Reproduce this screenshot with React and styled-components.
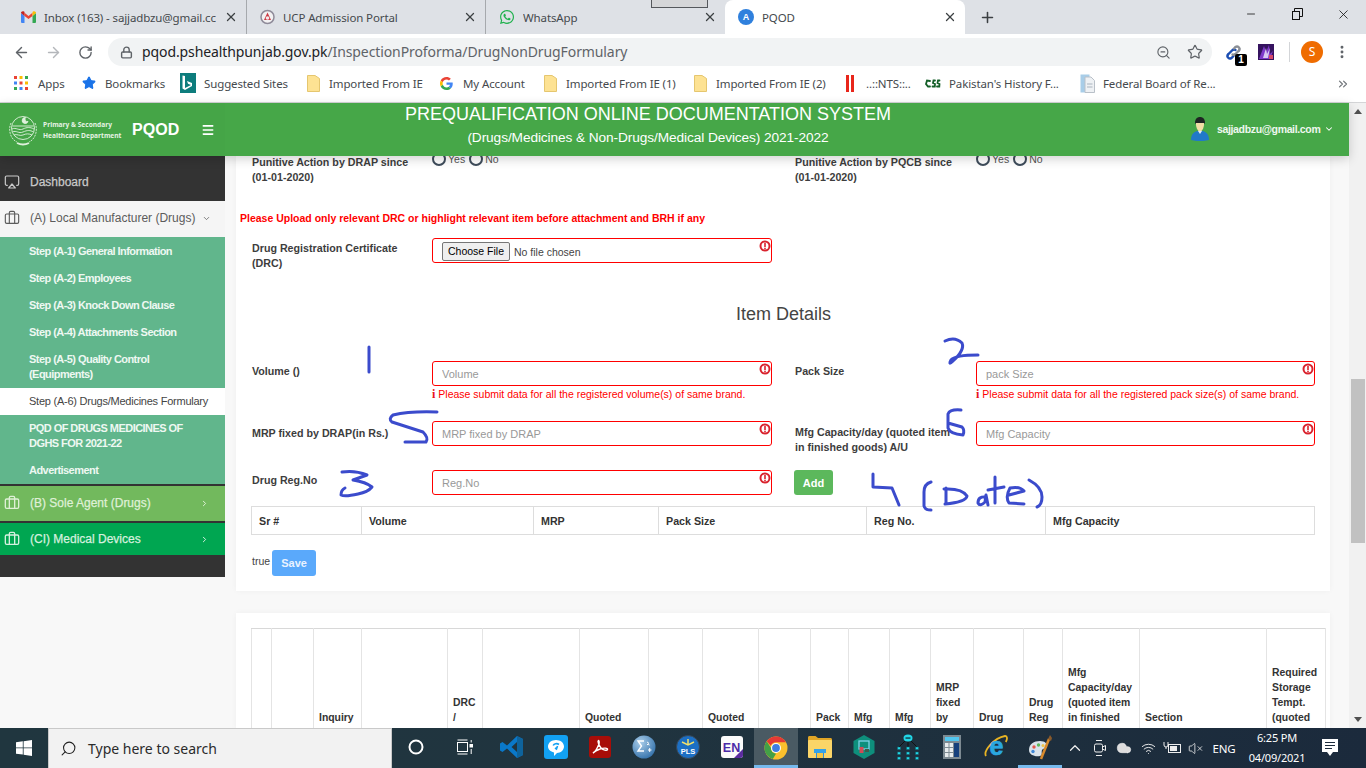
import styled, { createGlobalStyle } from "styled-components";
import {
  Airplay,
  ArrowLeft,
  ArrowRight,
  Briefcase,
  ChevronDown,
  ChevronRight,
  ChevronUp,
  ChevronsRight,
  Cloud,
  Lock,
  Menu,
  Minus,
  MoreVertical,
  Plus,
  RotateCw,
  Search,
  Star,
  VolumeX,
  Wifi,
  X,
  ZoomOut,
} from "lucide-react";
import { FaWhatsapp } from "react-icons/fa";

const UI_FONT = `"Noto Sans", "Liberation Sans", sans-serif`;

const GlobalStyle = createGlobalStyle`
  html, body {
    margin: 0;
    padding: 0;
    overflow: hidden;
  }
  * {
    box-sizing: border-box;
  }
  body {
    font-family: "Liberation Sans", Arial, sans-serif;
    font-size: 11px;
    color: #333;
  }
`;

const Screen = styled.div`
  width: 1366px;
  height: 768px;
  display: flex;
  flex-direction: column;
  overflow: hidden;
  position: relative;
  background: #fff;
`;

/* browser chrome */

const TabStrip = styled.div`
  height: 34px;
  flex: none;
  display: flex;
  align-items: stretch;
  padding-left: 8px;
  background: #dee1e6;
  font-family: ${UI_FONT};
  font-size: 11.5px;
  letter-spacing: -0.12px;
  color: #45494d;
`;

const GlitchBox = styled.div`
  position: absolute;
  left: 651px;
  top: 0;
  width: 57px;
  height: 8px;
  background: #d5d6d8;
  border: 1px solid #55585c;
  border-top: none;
`;

const Tab = styled.div`
  width: ${({ $width }) => $width || 239}px;
  flex: none;
  display: flex;
  align-items: center;
  gap: 8px;
  padding: 0 8px 0 13px;
  position: relative;
  background: ${({ $active }) => ($active ? "#fff" : "transparent")};
  border-radius: ${({ $active }) => ($active ? "8px 8px 0 0" : "0")};
  border-right: ${({ $divider }) => ($divider ? "1px solid #a6a9ad" : "none")};
  background-clip: padding-box;
`;

const TabTitle = styled.span`
  flex: 1;
  min-width: 0;
  white-space: nowrap;
  overflow: hidden;
`;

const TabClose = styled(X)`
  flex: none;
  color: #3c4043;
`;

const NewTab = styled.div`
  width: 44px;
  display: flex;
  align-items: center;
  justify-content: center;
  color: #3c4043;
`;

const WindowControls = styled.div`
  margin-left: auto;
  display: flex;
  align-items: flex-start;
  color: #111;
`;

const WindowButton = styled.div`
  width: 46px;
  height: 28px;
  display: flex;
  align-items: center;
  justify-content: center;
`;

const Toolbar = styled.div`
  height: 36px;
  flex: none;
  display: flex;
  align-items: center;
  padding-left: 5px;
  background: #fff;
  color: #5f6368;
`;

const NavButton = styled.div`
  width: 32px;
  display: flex;
  justify-content: center;
  color: ${({ $muted }) => ($muted ? "#b4b7bb" : "#5f6368")};
`;

const Omnibox = styled.div`
  width: 1104px;
  height: 28px;
  margin-left: 7px;
  display: flex;
  align-items: center;
  padding: 0 9px 0 12px;
  border-radius: 14px;
  background: #f1f3f4;
`;

const Url = styled.div`
  flex: 1;
  margin-left: 9px;
  padding-bottom: 2px;
  font-family: ${UI_FONT};
  font-size: 14px;
  letter-spacing: -0.1px;
  color: #5f6368;
  white-space: nowrap;
`;

const UrlHost = styled.span`
  color: #202124;
`;

const OmniIcons = styled.div`
  display: flex;
  align-items: center;
  gap: 16px;
`;

const ExtensionTray = styled.div`
  flex: 1;
  display: flex;
  align-items: center;
  padding-left: 13px;
`;

const ExtBadge = styled.span`
  position: absolute;
  right: -5px;
  bottom: -5px;
  width: 12px;
  height: 12px;
  border-radius: 2px;
  background: #000;
  color: #fff;
  font: bold 10px/12px "Liberation Sans", sans-serif;
  text-align: center;
`;

const ExtIcon = styled.div`
  position: relative;
  width: 17px;
  height: 17px;
  margin-right: ${({ $gap }) => $gap}px;
`;

const ToolbarDivider = styled.div`
  width: 1px;
  height: 20px;
  margin-right: 11px;
  background: #d3d5d8;
`;

const ProfileBadge = styled.div`
  width: 22px;
  height: 22px;
  border-radius: 50%;
  background: #ef6c00;
  color: #fff;
  font: 12px/22px ${UI_FONT};
  text-align: center;
  margin-right: 11px;
`;

const BookmarkBar = styled.div`
  height: 33px;
  flex: none;
  display: flex;
  align-items: center;
  padding-left: 14px;
  padding-bottom: 6px;
  background: #fff;
  border-bottom: 1px solid #d4d5d7;
  font-family: ${UI_FONT};
  font-size: 11.5px;
  letter-spacing: -0.12px;
  color: #45494d;
  position: relative;
`;

const Bookmark = styled.div`
  width: ${({ $width }) => $width}px;
  flex: none;
  display: flex;
  align-items: center;
  gap: ${({ $gap }) => $gap || 8}px;
  white-space: nowrap;
`;

const BookmarkMore = styled(ChevronsRight)`
  position: absolute;
  right: 16px;
  top: 7px;
  color: #70757a;
`;

/* site frame */

const Viewport = styled.div`
  flex: 1;
  min-height: 0;
  display: flex;
`;

const Site = styled.div`
  flex: 1;
  min-width: 0;
  display: flex;
  flex-direction: column;
  background: #f8f8f8;
`;

const Header = styled.header`
  height: 53px;
  flex: none;
  display: flex;
  align-items: stretch;
  position: relative;
  z-index: 2;
  background: #46a748;
  color: #fff;
  box-shadow: 0 3px 10px rgba(0, 0, 0, 0.18);
`;

const Brand = styled.div`
  width: 225px;
  flex: none;
  display: flex;
  align-items: center;
  padding-left: 8px;
  background: #45a547;
  position: relative;
`;

const BrandText = styled.div`
  margin-left: 5px;
  width: 89px;
  font-size: 6.6px;
  line-height: 11px;
  font-weight: bold;
  font-family: "Open Sans", sans-serif;
  color: #e6f3e4;
  white-space: nowrap;
`;

const BrandName = styled.div`
  font-size: 16px;
  font-weight: bold;
  letter-spacing: 0.1px;
`;

const HeaderMenu = styled(Menu)`
  margin-left: 21px;
`;

const TitleBlock = styled.div`
  width: 846px;
  flex: none;
  display: flex;
  flex-direction: column;
  align-items: center;
`;

const MainTitle = styled.div`
  font-size: 18px;
  line-height: 23px;
  white-space: nowrap;
`;

const SubTitle = styled.div`
  font-size: 13.7px;
  line-height: 20px;
  margin-top: 2px;
  letter-spacing: -0.1px;
  white-space: nowrap;
`;

const UserBlock = styled.div`
  flex: 1;
  display: flex;
  align-items: center;
  padding-left: 120px;
  padding-bottom: 1px;
  white-space: nowrap;
`;

const UserMail = styled.span`
  margin-left: 8px;
  margin-right: 4px;
  font-size: 10.5px;
  font-weight: bold;
  color: #eef7ee;
  letter-spacing: -0.35px;
`;

const Body = styled.div`
  flex: 1;
  min-height: 0;
  display: flex;
  overflow: hidden;
`;

/* sidebar */

const Sidebar = styled.nav`
  width: 225px;
  flex: none;
  height: 421px;
  background: #333;
`;

const NavGroup = styled.div`
  height: ${({ $height }) => $height}px;
  margin-bottom: ${({ $gap }) => $gap || 0}px;
  display: flex;
  align-items: center;
  padding: ${({ $drop }) => $drop || 0}px 0 ${({ $lift }) => $lift || 0}px 4px;
  font-size: 12px;
  background: ${({ $bg }) => $bg};
  color: ${({ $color }) => $color};

  svg {
    flex: none;
  }
`;

const NavLabel = styled.span`
  margin-left: 10px;
  flex: ${({ $fill }) => ($fill ? 1 : "none")};
  -webkit-text-stroke: ${({ $strong }) => ($strong ? "0.25px" : "0")};
  white-space: nowrap;
`;

const NavArrow = styled.span`
  display: flex;
  margin-right: 16px;
  margin-left: ${({ $inline }) => ($inline ? "7px" : "0")};
`;

const SubMenu = styled.div`
  padding-top: 1px;
  background: #61b68c;
  margin-bottom: 2px;
`;

const SubItem = styled.div`
  padding: 6px 30px 6px 29px;
  min-height: 27px;
  font-size: 11px;
  line-height: 15px;
  font-weight: ${({ $active }) => ($active ? 400 : 700)};
  letter-spacing: ${({ $active }) => ($active ? "-0.24px" : "-0.55px")};
  color: ${({ $active }) => ($active ? "#444" : "#eef8f2")};
  background: ${({ $active }) => ($active ? "#fff" : "transparent")};
  white-space: ${({ $active }) => ($active ? "nowrap" : "normal")};
`;

/* page content */

const Content = styled.main`
  flex: 1;
  min-width: 0;
  position: relative;
  overflow: hidden;
  padding: 0 19px 0 11px;
`;

const Ink = styled.svg`
  position: absolute;
  left: 0;
  top: 0;
  pointer-events: none;
  fill: none;
  stroke: #3b4bcc;
  stroke-width: 3;
  stroke-linecap: round;
  stroke-linejoin: round;
`;

const Card = styled.section`
  background: #fff;
  margin-top: ${({ $top }) => $top}px;
  padding: 0 15px 15px 16px;
  box-shadow: 0 0 6px rgba(0, 0, 0, 0.04);
`;

const FormRow = styled.div`
  display: grid;
  grid-template-columns: 180px 340px 23px 181px 339px;
  margin-top: ${({ $top }) => $top || 0}px;
  align-items: start;
`;

const Label = styled.label`
  display: block;
  grid-column: ${({ $col }) => $col};
  padding-top: ${({ $pad }) => ($pad === undefined ? 3 : $pad)}px;
  font-size: 10.7px;
  line-height: 15px;
  font-weight: bold;
  color: #3d3d3d;
`;

const RadioLine = styled.div`
  display: flex;
  align-items: center;
  gap: 2px;
  height: 10px;
  font-size: 10.5px;
  color: #555;
  margin-top: -1px;
`;

const Radio = styled.span`
  width: 14px;
  height: 14px;
  flex: none;
  border-radius: 50%;
  border: 2px solid #3f4d5c;
  background: #fff;
  margin-left: ${({ $gap }) => $gap || 0}px;
`;

const Notice = styled.p`
  margin: 26px 0 0 -12px;
  font-size: 10.5px;
  line-height: 14px;
  font-weight: bold;
  color: #f00;
`;

const FieldBox = styled.div`
  grid-column: ${({ $col }) => $col};
`;

const FieldWrap = styled.div`
  position: relative;
  height: 25px;
  display: flex;
  align-items: center;
  padding-left: 9px;
  border: 1px solid #f00;
  border-radius: 3px;
  background: #fff;
`;

const TextInput = styled.input`
  width: 100%;
  border: 0;
  padding: 0;
  outline: 0;
  background: transparent;
  font: 11px "Liberation Sans", sans-serif;
  &::placeholder {
    color: #999;
    opacity: 1;
  }
`;

const FileInput = styled.input`
  font: 10.5px "Liberation Sans", sans-serif;
  color: #444;
  margin-top: 1px;
  &::file-selector-button {
    font: 10.5px "Liberation Sans", sans-serif;
    height: 19px;
    width: 68px;
    padding: 0;
    color: #000;
    background: #efefef;
    border: 1px solid #767676;
    border-radius: 2px;
  }
`;

const ErrorBadge = styled.svg`
  position: absolute;
  right: -1px;
  top: 0;
`;

const Hint = styled.div`
  display: flex;
  align-items: center;
  gap: 3px;
  height: 14px;
  margin-top: 1px;
  font-size: 10.5px;
  color: #f00;
  white-space: nowrap;
`;

const HintMark = styled.b`
  font: bold 12px "Liberation Serif", serif;
  color: #e8111a;
`;

const SectionTitle = styled.h2`
  margin: 33px 0 0;
  font-size: 18px;
  line-height: 20px;
  font-weight: 400;
  text-align: center;
  color: #444;
`;

const AddButton = styled.button`
  grid-column: 4;
  width: 39px;
  height: 25px;
  margin-left: -1px;
  padding: 0;
  border: 0;
  border-radius: 3px;
  background: #5cb85c;
  color: #fff;
  font: bold 11px "Liberation Sans", sans-serif;
`;

const GridTable = styled.table`
  width: ${({ $width }) => $width}px;
  table-layout: fixed;
  border-collapse: collapse;
  margin: ${({ $margin }) => $margin || 0};
`;

const Column = styled.col`
  width: ${({ $width }) => $width}px;
`;

const ItemHead = styled.th`
  height: 28px;
  padding: 0 7px;
  border: 1px solid #ddd;
  text-align: left;
  font-size: 10.7px;
  font-weight: bold;
  color: #333;
`;

const ListHead = styled.th`
  height: 101px;
  padding: 0 4px 4px 5px;
  border: 1px solid #e4e4e4;
  border-top-color: #d8d8d8;
  text-align: left;
  vertical-align: bottom;
  font-size: 10.4px;
  line-height: 15px;
  font-weight: bold;
  color: #333;
  white-space: nowrap;
`;

const SaveRow = styled.div`
  display: flex;
  align-items: center;
  gap: 2px;
  margin-top: 15px;
  font-size: 10.5px;
  color: #444;
`;

const TrueLabel = styled.span`
  margin-top: -4px;
`;

const SaveButton = styled.button`
  width: 44px;
  height: 26px;
  padding: 0;
  border: 0;
  border-radius: 3px;
  background: #5aa9fb;
  color: #e9f3ff;
  font: bold 11px "Liberation Sans", sans-serif;
`;

const ListCard = styled(Card)`
  padding: 15px 4px 0 15px;
  margin-top: 22px;
`;

/* page scrollbar */

const ScrollTrack = styled.div`
  width: 17px;
  flex: none;
  display: flex;
  flex-direction: column;
  align-items: center;
  position: relative;
  background: #f1f1f1;
`;

const ScrollArrow = styled.div`
  width: 0;
  height: 0;
  border-left: 4px solid transparent;
  border-right: 4px solid transparent;
  ${({ $down }) =>
    $down
      ? "border-top: 5px solid #505050; margin-top: auto; margin-bottom: 6px;"
      : "border-bottom: 5px solid #505050; margin-top: 6px;"}
`;

const ScrollThumb = styled.div`
  width: 14px;
  height: 164px;
  margin-top: 265px;
  background: #c1c1c1;
`;

/* taskbar */

const Taskbar = styled.footer`
  height: 40px;
  flex: none;
  display: flex;
  align-items: stretch;
  background: linear-gradient(90deg, #20363f 0%, #20343f 45%, #1b2a3c 100%);
  color: #fff;
`;

const StartButton = styled.div`
  width: 48px;
  flex: none;
  display: flex;
  align-items: center;
  justify-content: center;
`;

const SearchBox = styled.div`
  width: 344px;
  flex: none;
  display: flex;
  align-items: center;
  gap: 11px;
  padding-left: 11px;
  background: #f2f2f2;
  border: 1px solid #c9c9c9;
  border-bottom: 0;
  font-family: ${UI_FONT};
  font-size: 14px;
  color: #2b2b2b;
`;

const SearchGlass = styled(Search)`
  transform: scaleX(-1);
  color: #222;
`;

const TaskSlot = styled.div`
  width: ${({ $width }) => $width || 44}px;
  flex: none;
  display: flex;
  align-items: center;
  justify-content: center;
  background: ${({ $active }) => ($active ? "#4a5a63" : "transparent")};
  border-bottom: 3px solid ${({ $running }) => ($running ? "#76b9ed" : "transparent")};
  padding-top: ${({ $running }) => ($running ? "3px" : "0")};
`;

const TrayIcon = styled.div`
  width: ${({ $width }) => $width || 24}px;
  flex: none;
  display: flex;
  align-items: center;
  justify-content: center;
  color: #f0f0f0;
`;

const TrayText = styled.div`
  flex: none;
  width: ${({ $width }) => $width}px;
  font-family: ${UI_FONT};
  font-size: 11.5px;
  letter-spacing: -0.2px;
  text-align: center;
  align-self: center;
`;

const Clock = styled.div`
  flex: none;
  width: 70px;
  align-self: center;
  font-family: ${UI_FONT};
  font-size: 11px;
  line-height: 20px;
  letter-spacing: -0.2px;
  text-align: center;
`;

/* drawn icons */

const GmailIcon = () => (
  <svg width="15" height="12" viewBox="0 0 15 12">
    <path d="M0 2v9a1 1 0 0 0 1 1h2.5V5z" fill="#4285f4" />
    <path d="M15 2v9a1 1 0 0 1-1 1h-2.5V5z" fill="#34a853" />
    <path d="M3.5 5V1.8L7.5 5l4-3.200V5l-4 3z" fill="#ea4335" />
    <path d="M0 2C0 .5 1.700-.4 3 .6l.5.4V5z" fill="#c5221f" />
    <path d="M15 2c0-1.500-1.700-2.400-3-1.400l-.5.4V5z" fill="#fbbc04" />
  </svg>
);

const UcpIcon = () => (
  <svg width="15" height="16" viewBox="0 0 15 16">
    <circle cx="7.5" cy="8" r="6.5" fill="#f3f1f2" stroke="#8f8b99" strokeWidth="1.5" />
    <path d="M7.5 3.5 11 11H4z" fill="#cc3a45" />
    <circle cx="7.5" cy="9" r="1.8" fill="#f4e9ea" />
  </svg>
);

const WhatsappIcon = styled(FaWhatsapp)`
  color: #1fb14d;
  flex: none;
`;

const PqodFavicon = styled.span`
  width: 16px;
  height: 16px;
  flex: none;
  border-radius: 50%;
  background: #2f80dd;
  color: #fff;
  font: bold 9px/16px "Liberation Sans", sans-serif;
  text-align: center;
`;

const RestoreIcon = () => (
  <svg width="12" height="12" viewBox="0 0 12 12" fill="none" stroke="#111">
    <rect x="1.5" y="3.5" width="7" height="8" fill="#dee1e6" />
    <path d="M3.5 3.500V.5h8v8H8.500" />
  </svg>
);

const LinkExtension = () => (
  <svg width="17" height="17" viewBox="0 0 17 17" fill="none" strokeWidth="2.4" strokeLinecap="round">
    <path d="M3 10.500 7 6.500a3 3 0 0 1 3.500-.5" stroke="#1d4fb3" />
    <path d="M3 10.500a2.500 2.500 0 0 0 3.500 3.500l2-2" stroke="#1d4fb3" />
    <path d="M14 6.500 10.500 10a3 3 0 0 1-3 .6" stroke="#8b8f96" />
    <path d="M14 6.500A2.500 2.500 0 0 0 10.500 3L9 4.500" stroke="#8b8f96" />
  </svg>
);

const ArtExtension = () => (
  <svg width="16" height="16" viewBox="0 0 16 16">
    <rect width="16" height="16" fill="#35135f" />
    <path d="M1 15 6 2l2 6 3-7 1 9 3-3-3 8z" fill="#7e39c9" />
    <path d="M5 14 8 4l1 6 3-6-2 10z" fill="#d9c9f2" />
    <rect x="11" y="11" width="4" height="4" fill="#d5476a" />
  </svg>
);

const AppsGrid = () => {
  const dots = ["#ea4335", "#fbbc04", "#34a853", "#4285f4", "#ea4335", "#fbbc04", "#34a853", "#4285f4", "#ea4335"];
  return (
    <svg width="14" height="14" viewBox="0 0 14 14">
      {dots.map((fill, i) => (
        <rect key={i} x={(i % 3) * 5.5} y={Math.floor(i / 3) * 5.5} width="3" height="3" fill={fill} />
      ))}
    </svg>
  );
};

const BingIcon = () => (
  <svg width="16" height="20" viewBox="0 0 16 20">
    <rect width="16" height="20" fill="#0d7c7c" />
    <path d="M5 3v12l6-3-3-1.200L7 8l5 2v3l-7 4-2.500-1.500V2.500z" fill="#fff" />
  </svg>
);

const FolderIcon = () => (
  <svg width="13" height="17" viewBox="0 0 13 17">
    <path d="M.5.5H8l4.500 3v13H.5z" fill="#fde293" stroke="#e5c66f" />
  </svg>
);

const GoogleIcon = () => (
  <svg width="13" height="13" viewBox="0 0 48 48">
    <path d="M24 9.500c3.500 0 6.700 1.300 9.100 3.500l6.800-6.800C35.800 2.400 30.200 0 24 0 14.600 0 6.500 5.400 2.600 13.200l7.900 6.200C12.400 13.700 17.700 9.500 24 9.500z" fill="#ea4335" />
    <path d="M47 24.500c0-1.600-.1-3.100-.4-4.500H24v9h13c-.6 3-2.200 5.500-4.800 7.200l7.700 6C44.400 37.900 47 31.800 47 24.500z" fill="#4285f4" />
    <path d="M10.500 28.600a14.500 14.500 0 0 1 0-9.200l-7.900-6.200a24 24 0 0 0 0 21.600z" fill="#fbbc04" />
    <path d="M24 48c6.500 0 11.900-2.100 15.900-5.800l-7.700-6c-2.200 1.400-4.900 2.300-8.200 2.300-6.300 0-11.600-4.200-13.500-9.900l-7.900 6.200C6.500 42.600 14.600 48 24 48z" fill="#34a853" />
  </svg>
);

const NtsIcon = () => (
  <svg width="8" height="17" viewBox="0 0 8 17">
    <rect width="3" height="17" fill="#e8261b" />
    <rect x="5" width="3" height="17" fill="#e8261b" />
  </svg>
);

const CssIcon = () => (
  <svg width="16" height="9" viewBox="0 0 16 9" fill="none" stroke="#145f28" strokeWidth="1.8" strokeLinecap="round">
    <path d="M5 2 2 1.500 1 5l2 2.500h2" />
    <path d="M7.500 7.500h2.300L10 5 8 4l.5-2.500H10" />
    <path d="M12 7.500h2.300L14.500 5l-2-1 .5-2.500h1.500" />
  </svg>
);

const DocIcon = () => (
  <svg width="15" height="19" viewBox="0 0 15 19">
    <rect x=".5" y=".5" width="9" height="18" fill="#a8cde8" />
    <path d="M5 3h6l3.500 3.500v12H5z" fill="#eef1f4" stroke="#b9c0c8" />
    <path d="M7 10h5.500M7 13h5.500" stroke="#aab4be" />
  </svg>
);

const SealLogo = () => (
  <svg width="30" height="34" viewBox="0 0 30 34" fill="none" stroke="#dff0dc" strokeWidth="0.9">
    <circle cx="15" cy="15" r="11.5" />
    <path d="M3 10C0 16 2 26 9 29M27 10c3 6 1 16-6 19" strokeDasharray="2 1" />
    <path d="M17.500 4.500a3 3 0 1 0 2.500 4 2.500 2.500 0 0 1-2.500-4z" fill="#dff0dc" />
    <path d="M4.500 13h21M4 16c4-2 7 2 11 0s7-2 11 0M4.500 19c4-2 6 2 10.500 0s7-2 10.500 0M6 22c3-1.500 6 1.500 9 0s6-1.500 9 0" />
    <path d="M9 30c4 2 8 2 12 0" strokeWidth="1.8" />
  </svg>
);

const UserAvatar = () => (
  <svg width="18" height="24" viewBox="0 0 18 24">
    <path d="M0 23c0-6 3-8 6-9h6c3 1 6 3 6 9-5 1.500-13 1.500-18 0z" fill="#2179c9" />
    <path d="M4 6c0-4 2-6 5-6s5 2 5 6l-1 1H5z" fill="#1f2523" />
    <path d="M5 6h8c.3 4-1.500 8-4 9-2.500-1-4.300-5-4-9z" fill="#f2dda6" />
    <path d="M7 14h4l-2 3z" fill="#e8edf2" />
  </svg>
);

const ErrorMark = () => (
  <ErrorBadge width="14" height="14" viewBox="0 0 14 14">
    <circle cx="7" cy="7" r="4.5" fill="#fff" stroke="#d9232e" strokeWidth="2" />
    <rect x="6.2" y="4" width="1.6" height="4" fill="#d9232e" />
    <rect x="6.2" y="8.700" width="1.6" height="1.5" fill="#d9232e" />
  </ErrorBadge>
);

const WindowsLogo = () => (
  <svg width="16" height="16" viewBox="0 0 16 16" fill="#fff">
    <path d="M0 2.300 6.800 1.300v6.200H0zM7.600 1.200 16 0v7.500H7.600zM0 8.300h6.800v6.300L0 13.700zM7.600 8.300H16V16l-8.400-1.200z" />
  </svg>
);

const TaskViewIcon = () => (
  <svg width="16" height="16" viewBox="0 0 16 16" fill="none" stroke="#fff">
    <rect x=".5" y="3.5" width="10" height="9" />
    <path d="M.5 1h10M.5 15h10" />
    <rect x="13" y="5.5" width="2.5" height="2.5" fill="#fff" />
    <path d="M14.200 1v2.500M14.200 10v5" />
  </svg>
);

const VsCodeIcon = () => (
  <svg width="24" height="24" viewBox="0 0 24 24">
    <path d="M17 1 23 4v16l-6 3-10-9.500-4.500 3.500L0 15.500v-7L2.500 7l4.500 3.500zM17 7l-5.500 5 5.500 5z" fill="#0a78c9" />
    <path d="M17 1l6 3v16l-6 3z" fill="#0e639c" />
  </svg>
);

const BubbleIcon = () => (
  <svg width="24" height="24" viewBox="0 0 24 24">
    <rect width="24" height="24" rx="3" fill="#12a1f3" />
    <path d="M12 5c4.500 0 8 2.800 8 6.500S16.500 18 13 18l-3 3v-3.500C6.500 16.500 4 14.500 4 11.500 4 7.800 7.500 5 12 5z" fill="#fff" />
    <path d="M15 9.500c-2-1.500-5-1-5.800 1M11 13l1.500 1 1-3" fill="none" stroke="#12a1f3" strokeWidth="1.6" />
  </svg>
);

const AcrobatIcon = () => (
  <svg width="22" height="22" viewBox="0 0 22 22">
    <rect width="22" height="22" rx="3" fill="#a80d08" />
    <path d="M4 17c2-1 4-4 6-9 .5-1.500 0-4-.7-3.500C8.500 5 9.500 9 12 12c2 2 6 3 6.500 1.500S15 11.500 11 13c-3 1-6 3-7 4z" fill="none" stroke="#fff" strokeWidth="1.4" />
  </svg>
);

const SigmaIcon = () => (
  <svg width="24" height="24" viewBox="0 0 24 24">
    <defs>
      <radialGradient id="sigmaFill" cx="0.35" cy="0.3" r="0.8">
        <stop offset="0" stopColor="#a9cdea" />
        <stop offset="1" stopColor="#2f6ea8" />
      </radialGradient>
    </defs>
    <circle cx="12" cy="12" r="11.5" fill="url(#sigmaFill)" />
    <path d="M12 6H6l3.500 5L6 16h6" fill="none" stroke="#fff" strokeWidth="1.4" />
    <path d="M15 7.500c2-1 2 2.500 0 2 1 0 2 0 2.500.5M16 15h3.500M17.700 13v4" fill="none" stroke="#fff" />
  </svg>
);

const PlsIcon = () => (
  <svg width="24" height="24" viewBox="0 0 24 24">
    <circle cx="12" cy="12" r="11.5" fill="#1c6fc4" stroke="#3b4752" />
    <path d="M12 4v5M6 7l6 3 6-3" stroke="#f2e06b" strokeWidth="1.5" fill="none" />
    <text x="12" y="19" fontFamily="Liberation Sans" fontSize="7.5" fontWeight="bold" fill="#fff" textAnchor="middle">
      PLS
    </text>
  </svg>
);

const EnIcon = () => (
  <svg width="22" height="22" viewBox="0 0 22 22">
    <rect width="22" height="22" rx="3" fill="#fbfbfb" />
    <path d="M22 13v6a3 3 0 0 1-3 3h-6z" fill="#5b2ca0" />
    <text x="10.5" y="16" fontFamily="Liberation Sans" fontSize="12.5" fontWeight="bold" fill="#4b2aa8" textAnchor="middle">
      EN
    </text>
  </svg>
);

const ChromeIcon = () => (
  <svg width="24" height="24" viewBox="0 0 24 24">
    <circle cx="12" cy="12" r="11.5" fill="#fbc02d" />
    <path d="M12 .5a11.500 11.500 0 0 1 10 5.800H12a5.700 5.700 0 0 0-5.300 3.500L2.700 5.200A11.500 11.500 0 0 1 12 .5z" fill="#e53935" />
    <path d="M2.700 5.200 7 12a5.700 5.700 0 0 0 5 5.700l-3.200 5.300A11.500 11.500 0 0 1 2.700 5.200z" fill="#43a047" />
    <circle cx="12" cy="12" r="5" fill="#fff" />
    <circle cx="12" cy="12" r="3.9" fill="#3f7de0" />
  </svg>
);

const ExplorerIcon = () => (
  <svg width="24" height="22" viewBox="0 0 24 22">
    <path d="M0 1.500C0 .6.6 0 1.500 0h6L10 2h12.500c.9 0 1.500.6 1.500 1.500V6H0z" fill="#e0a526" />
    <rect y="4" width="24" height="18" rx="1" fill="#fbd568" />
    <path d="M8 22v-6l4-3 4 3v6h-3v-3h-2v3z" fill="#2f90d8" />
    <rect x="6" y="13" width="12" height="4" fill="#35a2e8" />
    <rect x="9" y="17" width="6" height="5" fill="#f6c745" />
  </svg>
);

const HexIcon = () => (
  <svg width="22" height="24" viewBox="0 0 22 24">
    <path d="M11 0 21.500 6v12L11 24 .5 18V6z" fill="#0e8f7c" />
    <rect x="6" y="6" width="10" height="8" fill="none" stroke="#7fd2e8" strokeWidth="1.3" />
    <rect x="6.5" y="12" width="4" height="6" fill="#d14b56" />
    <rect x="12" y="14" width="4" height="3" fill="#3c5d4e" />
  </svg>
);

const TreeIcon = () => (
  <svg width="24" height="26" viewBox="0 0 24 26" fill="none">
    <path d="M9 7 3 13M15 7l6 6M12 8v5" stroke="#111" strokeWidth="1" />
    <ellipse cx="12" cy="4" rx="4.5" ry="3.5" fill="#22d6e6" />
    <rect x="9.5" y="3.4" width="5" height="1.3" fill="#10303a" />
    {[3, 12, 21].map((x) =>
      [13, 18, 23].map((y) => <rect key={`${x}-${y}`} x={x - 1.5} y={y} width="3" height="2.5" fill="#22d6e6" stroke="#0f5d68" strokeWidth="0.5" />)
    )}
  </svg>
);

const CalculatorIcon = () => (
  <svg width="18" height="24" viewBox="0 0 18 24">
    <rect width="18" height="24" fill="#7d8a92" />
    <rect x="2" y="2" width="14" height="4" fill="#52c6ef" />
    {[0, 1, 2].map((row) =>
      [0, 1].map((col) => <rect key={`${row}-${col}`} x={2 + col * 4.5} y={8 + row * 5} width="3.5" height="4" fill="#e8ecee" />)
    )}
    <rect x="11" y="8" width="5" height="14" fill="#16407c" />
  </svg>
);

const IeIcon = () => (
  <svg width="24" height="24" viewBox="0 0 24 24" fill="none">
    <path d="M2 21C-1 16 10 3 21 1c2.500-.2 2.500 3 .8 6" stroke="#e8b423" strokeWidth="1.8" />
    <text x="12.5" y="20" fontFamily="Liberation Sans" fontSize="25" fontWeight="bold" fill="#2aa7e0" stroke="#2aa7e0" strokeWidth="0.7" textAnchor="middle">
      e
    </text>
  </svg>
);

const PaintIcon = () => (
  <svg width="24" height="26" viewBox="0 0 24 26">
    <path d="M1 15C1 9 6 6 12 6c5 0 8 3 7 6-1 2-4 1-5 3-1 3 1 5-2 6-5 1-11-1-11-6z" fill="#d9e2ea" />
    <circle cx="6" cy="12" r="1.7" fill="#e2574c" />
    <circle cx="10.5" cy="10" r="1.7" fill="#5cb85c" />
    <circle cx="5" cy="16.5" r="1.7" fill="#3f87d6" />
    <circle cx="15" cy="10.5" r="1.5" fill="#efc34a" />
    <path d="M13 24 21 4" stroke="#d98a2b" strokeWidth="2.5" />
    <path d="M20 4l2-4 2 3-1 3z" fill="#8a5a2b" />
  </svg>
);

const CameraTray = () => (
  <svg width="14" height="18" viewBox="0 0 14 18" fill="none" stroke="#eee">
    <path d="M3 1.500h6M3 16.500h6" />
    <rect x="1.5" y="5" width="8" height="8" rx="1.5" />
    <path d="M9.500 8l3-1.500v5L9.500 10" />
  </svg>
);

const BatteryTray = () => (
  <svg width="18" height="16" viewBox="0 0 18 16" fill="none" stroke="#eee">
    <rect x="5.5" y="4.5" width="12" height="8" />
    <rect x="7" y="6" width="7" height="5" fill="#eee" stroke="none" />
    <path d="M1 2v3a2 2 0 0 0 4 0V2M3 7v2" />
  </svg>
);

const NoteTray = () => (
  <svg width="16" height="18" viewBox="0 0 16 18">
    <path d="M0 0h16v13h-5l-3 4-3-4H0z" fill="#fff" />
    <path d="M3 3.500h10M3 6.500h10M3 9.500h7" stroke="#1b2a3c" />
  </svg>
);

/* data */

const menuSteps = [
  { text: "Step (A-1) General Information" },
  { text: "Step (A-2) Employees" },
  { text: "Step (A-3) Knock Down Clause" },
  { text: "Step (A-4) Attachments Section" },
  { text: "Step (A-5) Quality Control (Equipments)" },
  { text: "Step (A-6) Drugs/Medicines Formulary", active: true },
  { text: "PQD OF DRUGS MEDICINES OF DGHS FOR 2021-22" },
  { text: "Advertisement" },
];

const itemColumns = [
  ["Sr #", 110],
  ["Volume", 172],
  ["MRP", 125],
  ["Pack Size", 208],
  ["Reg No.", 179],
  ["Mfg Capacity", 269],
];

const listColumns = [
  [20, []],
  [42, []],
  [48, ["Inquiry"]],
  [86, []],
  [35, ["DRC", "/"]],
  [97, []],
  [69, ["Quoted"]],
  [54, []],
  [56, ["Quoted"]],
  [52, []],
  [38, ["Pack"]],
  [41, ["Mfg"]],
  [41, ["Mfg"]],
  [43, ["MRP", "fixed", "by"]],
  [50, ["Drug"]],
  [39, ["Drug", "Reg"]],
  [77, ["Mfg", "Capacity/day", "(quoted item", "in finished"]],
  [127, ["Section"]],
  [59, ["Required", "Storage", "Tempt.", "(quoted"]],
];

const Field = ({ col, placeholder }) => (
  <FieldBox $col={col}>
    <FieldWrap>
      <TextInput placeholder={placeholder} />
      <ErrorMark />
    </FieldWrap>
  </FieldBox>
);

const FieldWithHint = ({ col, placeholder, hint }) => (
  <FieldBox $col={col}>
    <FieldWrap>
      <TextInput placeholder={placeholder} />
      <ErrorMark />
    </FieldWrap>
    <Hint>
      <HintMark>i</HintMark>
      {hint}
    </Hint>
  </FieldBox>
);

const YesNo = ({ col }) => (
  <FieldBox $col={col}>
    <RadioLine>
      <Radio />
      Yes
      <Radio $gap={2} />
      No
    </RadioLine>
  </FieldBox>
);

const App = () => (
  <Screen>
    <GlobalStyle />
    <GlitchBox />

    <TabStrip>
      <Tab $divider>
        <GmailIcon />
        <TabTitle>Inbox (163) - sajjadbzu@gmail.cc</TabTitle>
        <TabClose size={14} strokeWidth={2.2} />
      </Tab>
      <Tab $divider>
        <UcpIcon />
        <TabTitle>UCP Admission Portal</TabTitle>
        <TabClose size={14} strokeWidth={2.2} />
      </Tab>
      <Tab>
        <WhatsappIcon size={16} />
        <TabTitle>WhatsApp</TabTitle>
        <TabClose size={14} strokeWidth={2.2} />
      </Tab>
      <Tab $active $width={240}>
        <PqodFavicon>A</PqodFavicon>
        <TabTitle>PQOD</TabTitle>
        <TabClose size={14} strokeWidth={2.2} />
      </Tab>
      <NewTab>
        <Plus size={17} strokeWidth={2.2} />
      </NewTab>
      <WindowControls>
        <WindowButton>
          <Minus size={12} strokeWidth={1.6} />
        </WindowButton>
        <WindowButton>
          <RestoreIcon />
        </WindowButton>
        <WindowButton>
          <X size={15} strokeWidth={1.3} />
        </WindowButton>
      </WindowControls>
    </TabStrip>

    <Toolbar>
      <NavButton>
        <ArrowLeft size={17} strokeWidth={2} />
      </NavButton>
      <NavButton $muted>
        <ArrowRight size={17} strokeWidth={2} />
      </NavButton>
      <NavButton>
        <RotateCw size={15} strokeWidth={2.2} />
      </NavButton>
      <Omnibox>
        <Lock size={13} strokeWidth={2.6} />
        <Url>
          <UrlHost>pqod.pshealthpunjab.gov.pk</UrlHost>/InspectionProforma/DrugNonDrugFormulary
        </Url>
        <OmniIcons>
          <ZoomOut size={15} strokeWidth={1.8} />
          <Star size={16} strokeWidth={1.8} />
        </OmniIcons>
      </Omnibox>
      <ExtensionTray>
        <ExtIcon $gap={16}>
          <LinkExtension />
          <ExtBadge>1</ExtBadge>
        </ExtIcon>
        <ExtIcon $gap={14}>
          <ArtExtension />
        </ExtIcon>
        <ToolbarDivider />
        <ProfileBadge>S</ProfileBadge>
        <MoreVertical size={16} strokeWidth={2.4} />
      </ExtensionTray>
    </Toolbar>

    <BookmarkBar>
      <Bookmark $width={68} $gap={10}>
        <AppsGrid />
        Apps
      </Bookmark>
      <Bookmark $width={98} $gap={9}>
        <Star size={14} fill="#1a73e8" color="#1a73e8" />
        Bookmarks
      </Bookmark>
      <Bookmark $width={127}>
        <BingIcon />
        Suggested Sites
      </Bookmark>
      <Bookmark $width={133} $gap={9}>
        <FolderIcon />
        Imported From IE
      </Bookmark>
      <Bookmark $width={104} $gap={10}>
        <GoogleIcon />
        My Account
      </Bookmark>
      <Bookmark $width={150} $gap={9}>
        <FolderIcon />
        Imported From IE (1)
      </Bookmark>
      <Bookmark $width={152} $gap={9}>
        <FolderIcon />
        Imported From IE (2)
      </Bookmark>
      <Bookmark $width={79} $gap={12}>
        <NtsIcon />
        ..::NTS::..
      </Bookmark>
      <Bookmark $width={155}>
        <CssIcon />
        Pakistan's History F...
      </Bookmark>
      <Bookmark $width={140}>
        <DocIcon />
        Federal Board of Re...
      </Bookmark>
      <BookmarkMore size={14} />
    </BookmarkBar>

    <Viewport>
      <Site>
        <Header>
          <Brand>
            <SealLogo />
            <BrandText>
              Primary &amp; Secondary
              <br />
              Healthcare Department
            </BrandText>
            <BrandName>PQOD</BrandName>
            <HeaderMenu size={14} strokeWidth={2.8} />
          </Brand>
          <TitleBlock>
            <MainTitle>PREQUALIFICATION ONLINE DOCUMENTATION SYSTEM</MainTitle>
            <SubTitle>(Drugs/Medicines &amp; Non-Drugs/Medical Devices) 2021-2022</SubTitle>
          </TitleBlock>
          <UserBlock>
            <UserAvatar />
            <UserMail>sajjadbzu@gmail.com</UserMail>
            <ChevronDown size={10} strokeWidth={2.5} />
          </UserBlock>
        </Header>

        <Body>
          <Sidebar>
            <NavGroup $height={45} $drop={7} $bg="#333" $color="#c9c9c9">
              <Airplay size={16} strokeWidth={1.8} />
              <NavLabel $strong>Dashboard</NavLabel>
            </NavGroup>
            <NavGroup $height={36} $lift={2} $bg="#f5f5f5" $color="#5c5c5c">
              <Briefcase size={16} strokeWidth={1.7} />
              <NavLabel>(A) Local Manufacturer (Drugs)</NavLabel>
              <NavArrow $inline>
                <ChevronDown size={9} strokeWidth={2} />
              </NavArrow>
            </NavGroup>
            <SubMenu>
              {menuSteps.map(({ text, active }) => (
                <SubItem key={text} $active={active}>
                  {text}
                </SubItem>
              ))}
            </SubMenu>
            <NavGroup $height={35} $lift={1} $gap={2} $bg="#72b95d" $color="#dff0d6">
              <Briefcase size={16} strokeWidth={2} />
              <NavLabel $fill $strong>(B) Sole Agent (Drugs)</NavLabel>
              <NavArrow>
                <ChevronRight size={9} strokeWidth={2.6} />
              </NavArrow>
            </NavGroup>
            <NavGroup $height={32} $bg="#00a651" $color="#d5f0df">
              <Briefcase size={16} strokeWidth={2} />
              <NavLabel $fill $strong>(CI) Medical Devices</NavLabel>
              <NavArrow>
                <ChevronRight size={9} strokeWidth={2.6} />
              </NavArrow>
            </NavGroup>
          </Sidebar>

          <Content>
            <Card $top={-1}>
              <FormRow>
                <Label $col={1} $pad={0}>
                  Punitive Action by DRAP since
                  <br />
                  (01-01-2020)
                </Label>
                <YesNo col={2} />
                <Label $col={4} $pad={0}>
                  Punitive Action by PQCB since
                  <br />
                  (01-01-2020)
                </Label>
                <YesNo col={5} />
              </FormRow>

              <Notice>Please Upload only relevant DRC or highlight relevant item before attachment and BRH if any</Notice>

              <FormRow $top={13}>
                <Label $col={1}>
                  Drug Registration Certificate
                  <br />
                  (DRC)
                </Label>
                <FieldBox $col={2}>
                  <FieldWrap>
                    <FileInput type="file" />
                    <ErrorMark />
                  </FieldWrap>
                </FieldBox>
              </FormRow>

              <SectionTitle>Item Details</SectionTitle>

              <FormRow $top={37}>
                <Label $col={1}>Volume ()</Label>
                <FieldWithHint col={2} placeholder="Volume" hint="Please submit data for all the registered volume(s) of same brand." />
                <Label $col={4}>Pack Size</Label>
                <FieldWithHint col={5} placeholder="pack Size" hint="Please submit data for all the registered pack size(s) of same brand." />
              </FormRow>

              <FormRow $top={20}>
                <Label $col={1} $pad={5}>MRP fixed by DRAP(in Rs.)</Label>
                <Field col={2} placeholder="MRP fixed by DRAP" />
                <Label $col={4} $pad={4}>
                  Mfg Capacity/day (quoted item
                  <br />
                  in finished goods) A/U
                </Label>
                <Field col={5} placeholder="Mfg Capacity" />
              </FormRow>

              <FormRow $top={15}>
                <Label $col={1}>Drug Reg.No</Label>
                <Field col={2} placeholder="Reg.No" />
                <AddButton>Add</AddButton>
              </FormRow>

              <GridTable $width={1063} $margin="11px 0 0 -1px">
                <colgroup>
                  {itemColumns.map(([name, width]) => (
                    <Column key={name} $width={width} />
                  ))}
                </colgroup>
                <thead>
                  <tr>
                    {itemColumns.map(([name]) => (
                      <ItemHead key={name}>{name}</ItemHead>
                    ))}
                  </tr>
                </thead>
              </GridTable>

              <SaveRow>
                <TrueLabel>true</TrueLabel>
                <SaveButton>Save</SaveButton>
              </SaveRow>
            </Card>

            <ListCard>
              <GridTable $width={1074}>
                <colgroup>
                  {listColumns.map(([width], i) => (
                    <Column key={i} $width={width} />
                  ))}
                </colgroup>
                <thead>
                  <tr>
                    {listColumns.map(([, lines], i) => (
                      <ListHead key={i}>
                        {lines.map((line) => (
                          <div key={line}>{line}</div>
                        ))}
                      </ListHead>
                    ))}
                  </tr>
                </thead>
              </GridTable>
            </ListCard>

            <Ink width="1124" height="572" viewBox="225 156 1124 572">
              <path d="M369 347V372" />
              <path d="M945 341Q955 336 962 343Q965 350 953 361Q948 366 951 360Q955 355 978 355" />
              <path d="M437 412Q410 411 393 415Q388 419 392 422L423 432Q429 438 426 442L405 442" />
              <path d="M961 410Q950 409 948 414V428Q950 434 963 435Q965 430 962 427L948 423" />
              <path d="M342 472Q355 470 367 475L353 480Q366 482 372 487Q368 492 358 494Q345 497 341 495Q341 490 345 488" />
              <path d="M873 474V487L892 488L899 505" />
              <path d="M931 482Q924 484 924 492V506Q925 510 931 510" />
              <path d="M946 488V503M944 489Q962 488 967 496Q966 502 945 504" />
              <path d="M986 497Q978 496 978 503Q980 507 985 502L986 495L988 505" />
              <path d="M995 477V503M988 490L1004 487" />
              <path d="M1009 495L1024 491Q1020 486 1010 488Q1005 497 1009 503L1024 504" />
              <path d="M1029 480Q1042 487 1042 497Q1042 505 1037 507" />
            </Ink>
          </Content>
        </Body>
      </Site>

      <ScrollTrack>
        <ScrollArrow />
        <ScrollThumb />
        <ScrollArrow $down />
      </ScrollTrack>
    </Viewport>

    <Taskbar>
      <StartButton>
        <WindowsLogo />
      </StartButton>
      <SearchBox>
        <SearchGlass size={17} strokeWidth={1.5} />
        Type here to search
      </SearchBox>
      <TaskSlot $width={48}>
        <svg width="16" height="16" viewBox="0 0 16 16" fill="none" stroke="#fff" strokeWidth="2">
          <circle cx="8" cy="8" r="6.5" />
        </svg>
      </TaskSlot>
      <TaskSlot $width={50}>
        <TaskViewIcon />
      </TaskSlot>
      <TaskSlot><VsCodeIcon /></TaskSlot>
      <TaskSlot><BubbleIcon /></TaskSlot>
      <TaskSlot><AcrobatIcon /></TaskSlot>
      <TaskSlot><SigmaIcon /></TaskSlot>
      <TaskSlot><PlsIcon /></TaskSlot>
      <TaskSlot><EnIcon /></TaskSlot>
      <TaskSlot $active $running><ChromeIcon /></TaskSlot>
      <TaskSlot><ExplorerIcon /></TaskSlot>
      <TaskSlot><HexIcon /></TaskSlot>
      <TaskSlot><TreeIcon /></TaskSlot>
      <TaskSlot><CalculatorIcon /></TaskSlot>
      <TaskSlot><IeIcon /></TaskSlot>
      <TaskSlot $running><PaintIcon /></TaskSlot>
      <TrayIcon $width={26}>
        <ChevronUp size={18} strokeWidth={1.6} />
      </TrayIcon>
      <TrayIcon><CameraTray /></TrayIcon>
      <TrayIcon><Cloud size={16} fill="#ddd" strokeWidth={1} /></TrayIcon>
      <TrayIcon><Wifi size={15} strokeWidth={1.5} /></TrayIcon>
      <TrayIcon><BatteryTray /></TrayIcon>
      <TrayIcon $width={22}><VolumeX size={15} strokeWidth={1.3} /></TrayIcon>
      <TrayText $width={36}>ENG</TrayText>
      <Clock>
        6:25 PM
        <br />
        04/09/2021
      </Clock>
      <TrayIcon $width={36}><NoteTray /></TrayIcon>
    </Taskbar>
  </Screen>
);

export default App;
